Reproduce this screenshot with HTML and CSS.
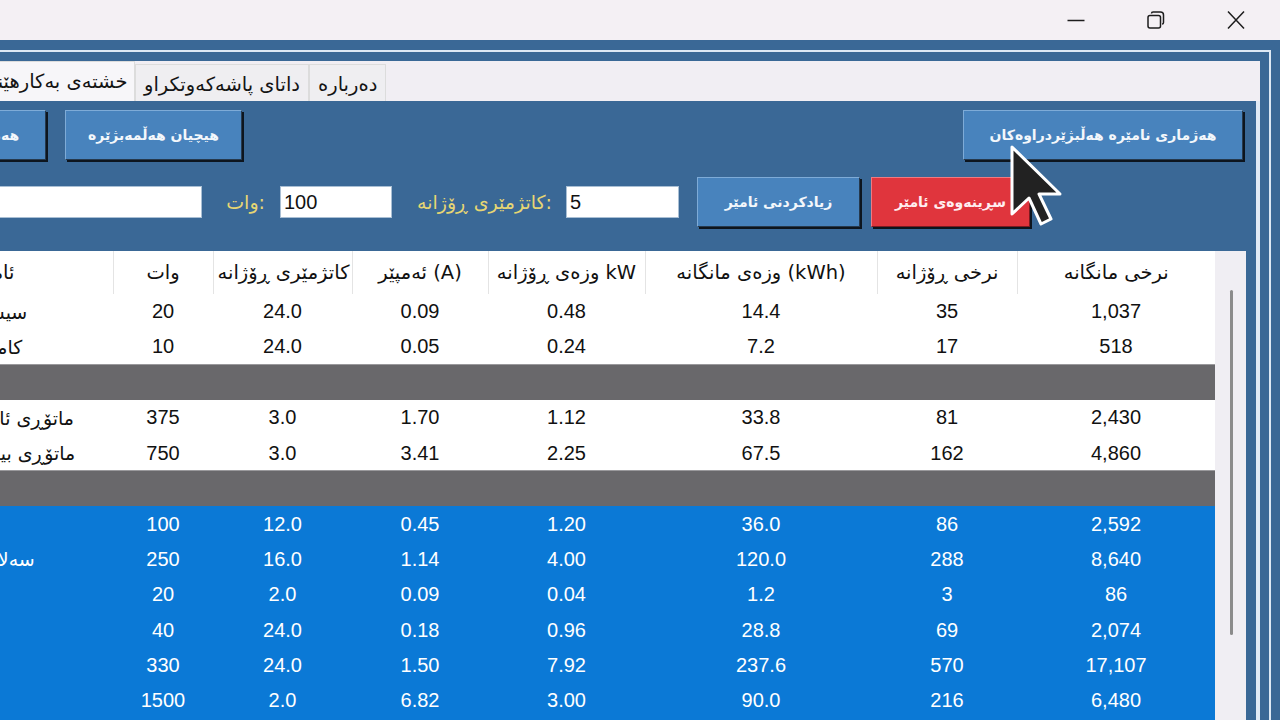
FILE: index.html
```html
<!DOCTYPE html>
<html lang="ckb">
<head>
<meta charset="utf-8">
<title>ئامێرەکان</title>
<link rel="stylesheet" href="styles.css">
</head>
<body>
<header class="titlebar">
  <span class="wc"><svg viewBox="0 0 20 20"><path d="M1.5 10.5h17"/></svg></span>
  <span class="wc"><svg viewBox="0 0 20 20"><rect x="2" y="5.5" width="12.5" height="12.5" rx="2"/><path d="M5.5 3.5c0-1 .8-1.5 1.6-1.5h7.4c1.8 0 3 1.2 3 3v7.4c0 .9-.6 1.6-1.5 1.6"/></svg></span>
  <span class="wc"><svg viewBox="0 0 20 20"><path d="M2 1.5l16 17M18 1.5l-16 17"/></svg></span>
</header>
<div class="frame">
  <div class="outer">
    <div class="tabctl">
      <nav class="tabstrip">
        <span class="tab active">خشتەی بەکارهێنان</span>
        <span class="tab">داتای پاشەکەوتکراو</span>
        <span class="tab">دەربارە</span>
      </nav>
      <section class="page">
        <div class="row1">
          <div class="btn-group">
            <button class="btn btn-all">هەمووی</button>
            <button class="btn btn-none">هیچیان هەڵمەبژێرە</button>
          </div>
          <button class="btn btn-count">هەژماری نامێرە هەڵبژێردراوەکان</button>
        </div>
        <div class="row2">
          <input class="field field-name" type="text" value="">
          <label class="lbl lbl-watt">وات:</label>
          <input class="field field-num" type="text" value="100">
          <label class="lbl lbl-hours">کاتژمێری ڕۆژانە:</label>
          <input class="field field-num field-hours" type="text" value="5">
          <button class="btn btn-add">زیادکردنی ئامێر</button>
          <button class="btn btn-danger">سڕینەوەی ئامێر</button>
        </div>
        <div class="grid-wrap">
          <table class="grid">
            <colgroup>
              <col class="c-name"><col class="c-watt"><col class="c-hours"><col class="c-amp"><col class="c-kw"><col class="c-kwh"><col class="c-dprice"><col class="c-mprice">
            </colgroup>
            <thead>
              <tr>
                <th class="name" dir="rtl">ئامێرەکان</th>
                <th>وات</th>
                <th>کاتژمێری ڕۆژانە</th>
                <th>ئەمپێر (A)</th>
                <th>وزەی ڕۆژانە kW</th>
                <th>وزەی مانگانە (kWh)</th>
                <th>نرخی ڕۆژانە</th>
                <th>نرخی مانگانە</th>
              </tr>
            </thead>
            <tbody>
              <tr><td class="name">سیستەم</td><td>20</td><td>24.0</td><td>0.09</td><td>0.48</td><td>14.4</td><td>35</td><td>1,037</td></tr>
              <tr><td class="name">کامێرای</td><td>10</td><td>24.0</td><td>0.05</td><td>0.24</td><td>7.2</td><td>17</td><td>518</td></tr>
              <tr class="sep"><td></td><td></td><td></td><td></td><td></td><td></td><td></td><td></td></tr>
              <tr><td class="name">ماتۆڕی ئاوەکە</td><td>375</td><td>3.0</td><td>1.70</td><td>1.12</td><td>33.8</td><td>81</td><td>2,430</td></tr>
              <tr><td class="name">ماتۆڕی بیرەکە</td><td>750</td><td>3.0</td><td>3.41</td><td>2.25</td><td>67.5</td><td>162</td><td>4,860</td></tr>
              <tr class="sep"><td></td><td></td><td></td><td></td><td></td><td></td><td></td><td></td></tr>
              <tr class="sel"><td class="name">تیڤی</td><td>100</td><td>12.0</td><td>0.45</td><td>1.20</td><td>36.0</td><td>86</td><td>2,592</td></tr>
              <tr class="sel"><td class="name">سەلاجەی</td><td>250</td><td>16.0</td><td>1.14</td><td>4.00</td><td>120.0</td><td>288</td><td>8,640</td></tr>
              <tr class="sel"><td class="name">چرا</td><td>20</td><td>2.0</td><td>0.09</td><td>0.04</td><td>1.2</td><td>3</td><td>86</td></tr>
              <tr class="sel"><td class="name">نێت</td><td>40</td><td>24.0</td><td>0.18</td><td>0.96</td><td>28.8</td><td>69</td><td>2,074</td></tr>
              <tr class="sel"><td class="name">فێن</td><td>330</td><td>24.0</td><td>1.50</td><td>7.92</td><td>237.6</td><td>570</td><td>17,107</td></tr>
              <tr class="sel"><td class="name">فڕن</td><td>1500</td><td>2.0</td><td>6.82</td><td>3.00</td><td>90.0</td><td>216</td><td>6,480</td></tr>
              <tr class="sel"><td class="name">ئوتو</td><td>75</td><td>8.0</td><td>0.34</td><td>0.60</td><td>18.0</td><td>43</td><td>1,296</td></tr>
            </tbody>
          </table>
          <div class="vscroll"><div class="thumb"></div></div>
        </div>
      </section>
    </div>
  </div>
</div>
<svg class="cursor" viewBox="0 0 52 82" aria-hidden="true"><path d="M2 2V69L19 53L31 79L41 74L29 49H50Z"/></svg>
</body>
</html>
```

FILE: styles.css
```css
* { box-sizing: border-box; }
html, body { margin: 0; padding: 0; }
body {
  width: 1280px;
  height: 720px;
  overflow: hidden;
  position: relative;
  background: #f4f0f4;
  font-family: "Noto Sans", "DejaVu Sans", sans-serif;
}

.titlebar {
  height: 40px;
  display: flex;
  justify-content: flex-end;
  padding-right: 4px;
  background: #f4f0f4;
}
.wc {
  width: 80px;
  height: 40px;
  display: flex;
  align-items: center;
  justify-content: center;
}
.wc svg {
  width: 20px;
  height: 20px;
  fill: none;
  stroke: #1d1d1d;
  stroke-width: 1.5;
}

.frame {
  height: 680px;
  background: #3a6896;
  padding-top: 10px;
  overflow: hidden;
}
.outer {
  height: 100%;
  margin-left: -46px;
  margin-right: 9px;
  border-top: 2px solid #dde8f4;
  border-right: 2px solid #dde8f4;
  padding: 9px 9px 0 0;
}
.tabctl {
  height: 100%;
  display: flex;
  flex-direction: column;
  background: #f1eef3;
}
.tabstrip {
  height: 40px;
  flex: none;
  display: flex;
  align-items: flex-end;
  padding-left: 2px;
}
.tab {
  height: 37px;
  display: flex;
  align-items: center;
  justify-content: center;
  padding: 3px 8px 0;
  font-family: "DejaVu Sans", sans-serif;
  font-size: 19.5px;
  color: #141414;
  background: #efeef1;
  border: 1px solid #dcdcdc;
  border-bottom: 0;
  white-space: nowrap;
}
.tab.active {
  height: 40px;
  padding: 0 0 0 14px;
  background: #f7f6f9;
  width: 179px;
}

.page {
  flex: 1;
  min-height: 0;
  background: #3a6896;
  border-right: 4px solid #e1eaf5;
  padding: 9px 10px 0 7px;
  display: flex;
  flex-direction: column;
}

.btn {
  height: 50px;
  padding: 0 10px;
  background: #4883bd;
  color: #f3f7fb;
  border: 1px solid #7eabd7;
  border-right-color: #26394d;
  border-bottom-color: #26394d;
  box-shadow: 2px 2px 0 #0d151e;
  font-family: "DejaVu Sans", sans-serif;
  font-weight: bold;
  font-size: 14px;
  white-space: nowrap;
  overflow: hidden;
}
.btn-danger {
  background: #e0353d;
  color: #ffeef0;
  border-color: #f07a80 #7b1a1f #7b1a1f #f07a80;
  width: 159px;
}
.btn-add { width: 163px; margin-left: 18px; }
.btn-danger { margin-left: 11px; }

.row1 {
  height: 50px;
  flex: none;
  display: flex;
  justify-content: space-between;
}
.btn-group { display: flex; gap: 19px; }
.btn-all { width: 85px; text-align: right; padding: 0 28px 0 0; }
.btn-none { width: 177px; }
.btn-count { width: 280px; margin-right: 3px; }

.row2 {
  height: 50px;
  flex: none;
  margin-top: 17px;
  display: flex;
  align-items: center;
  padding-right: 216px;
}
.field {
  height: 32px;
  background: #fff;
  border: 1px solid #a9bfd4;
  padding: 0 3px;
  font-family: "Liberation Sans", sans-serif;
  font-size: 20px;
  color: #111;
  outline: none;
}
.field-name { flex: 1; min-width: 0; }
.field-num { width: 112px; margin-left: 15px; }
.field-hours { width: 113px; margin-left: 14px; }
.lbl {
  font-family: "DejaVu Sans", sans-serif;
  font-size: 19px;
  color: #e6d673;
  white-space: nowrap;
}
.lbl-watt { margin-left: 24px; }
.lbl-hours { margin-left: 25px; }

.grid-wrap {
  flex: 1;
  min-height: 0;
  margin-top: 24px;
  display: flex;
  justify-content: flex-end;
}
.grid {
  flex: none;
  width: 1254px;
  align-self: flex-start;
  border-collapse: collapse;
  table-layout: fixed;
  background: #fff;
  font-family: "Liberation Sans", "DejaVu Sans", sans-serif;
  font-size: 20px;
  color: #111;
}
.c-name { width: 152px; }
.c-watt { width: 100px; }
.c-hours { width: 139px; }
.c-amp { width: 136px; }
.c-kw { width: 157px; }
.c-kwh { width: 232px; }
.c-dprice { width: 140px; }
.c-mprice { width: 198px; }

.grid th {
  height: 43px;
  font-family: "DejaVu Sans", sans-serif;
  font-weight: normal;
  font-size: 19.5px;
  color: #111;
  border-left: 1px solid #e4e4e4;
  white-space: nowrap;
  overflow: hidden;
  padding: 0 4px;
  text-align: center;
}
.grid th.name {
  text-align: right;
  padding-right: 98px;
  border-left: 0;
}
.grid td {
  height: 35.4px;
  padding: 0;
  text-align: center;
  white-space: nowrap;
  overflow: hidden;
}
.grid td.name {
  text-align: left;
  padding-left: 0;
  font-family: "DejaVu Sans", sans-serif;
  font-size: 19px;
}
.grid tr.sep td {
  background: #69686b;
  border-top: 1px solid #9a999c;
}
.grid tr.sel td {
  background: #0b79d6;
  color: #fff;
}

.vscroll {
  flex: none;
  width: 31px;
  background: #f0eef3;
  padding: 39px 0 0 15px;
}
.thumb {
  width: 3px;
  height: 345px;
  border-radius: 2px;
  background: #8b8b8b;
}

.cursor {
  position: absolute;
  left: 1010px;
  top: 145px;
  width: 52px;
  height: 82px;
  fill: #222;
  stroke: #fff;
  stroke-width: 3;
  stroke-linejoin: round;
}
```
